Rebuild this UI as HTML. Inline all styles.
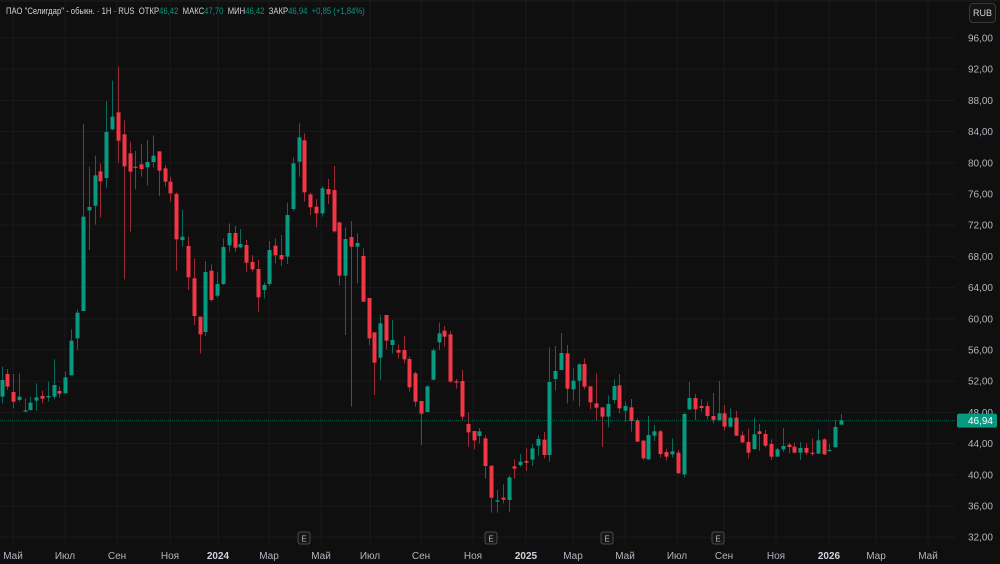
<!DOCTYPE html>
<html><head><meta charset="utf-8">
<style>
html,body{margin:0;padding:0;background:#0f0f0f;width:1000px;height:564px;overflow:hidden;font-family:"Liberation Sans",sans-serif}
#c{position:absolute;left:0;top:0}
.hdr{position:absolute;left:6px;top:6px;font-size:9.5px;color:#d1d4dc;white-space:nowrap;transform:scaleX(0.81);transform-origin:left top}
.hdr .g{color:#089981}
.rub{position:absolute;left:969px;top:3px;width:25px;height:18px;border:1px solid #3a3a3a;border-radius:4px;color:#d1d4dc;font-size:9px;line-height:18px;text-align:center;background:#131313}
</style></head><body>
<svg id="c" width="1000" height="564" xmlns="http://www.w3.org/2000/svg"></svg>
<div class="hdr">ПАО "Селигдар" - обыкн. · 1Н · RUS &nbsp;ОТКР<span class="g">46,42</span> &nbsp;МАКС<span class="g">47,70</span> &nbsp;МИН<span class="g">46,42</span> &nbsp;ЗАКР<span class="g">46,94</span> &nbsp;<span class="g">+0,85 (+1,84%)</span></div>
<div class="rub">RUB</div>
<script>
var s=document.getElementById('c'),h='';
function Y(p){return 38+(96-p)*7.8;}
for(var p=96;p>=32;p-=4){var y=Y(p);h+='<line x1="0" x2="955" y1="'+y+'" y2="'+y+'" stroke="#1a1a1a" stroke-width="1"/>';}
var mon=[[13,'Май'],[65,'Июл'],[117,'Сен'],[170,'Ноя'],[218,'2024',1],[269,'Мар'],[321,'Май'],[370,'Июл'],[421,'Сен'],[473,'Ноя'],[526,'2025',1],[573,'Мар'],[625,'Май'],[677,'Июл'],[724,'Сен'],[776,'Ноя'],[829,'2026',1],[876,'Мар'],[928,'Май']];
mon.forEach(function(m){h+='<line x1="'+m[0]+'" x2="'+m[0]+'" y1="0" y2="546" stroke="#1a1a1a"/>';});
h+='<line x1="0" x2="1000" y1="1" y2="1" stroke="#1e1e1e"/>';
var segs=[[60,[[2,960,1010,920,1030,1],[7,942,980,927,990,0],[13,996,1025,942,1045,0],[19,1010,1020,940,1025,1],[25,1051,1055,1015,1055,1],[30,1028,1050,1010,1052,1],[36,1012,1022,970,1052,1],[42,1008,1016,992,1030,0],[48,1008,1012,965,1025,1],[54,975,1010,898,1018,1],[59,993,1001,980,1012,0],[65,952,1000,935,1000,1],[71,842,946,808,946,1],[77,758,835,748,870,1],[83,470,753,192,753,1],[89,441,451,320,570,1],[95,346,437,287,494,1],[100,334,364,310,472,0],[106,216,354,123,383,1],[112,170,208,62,210,1],[118,157,242,20,308,0],[124,223,319,181,658,0],[130,280,335,245,515,0],[135,320,323,273,388,0],[141,313,327,253,350,0],[147,306,322,240,376,1],[153,287,306,226,322,1],[159,274,332,274,408,0],[165,325,365,315,380,0],[170,365,400,350,425,0],[176,402,538,398,632,0],[182,530,540,450,560,1],[188,558,652,530,690,0],[194,655,768,595,795,0]]],
[110,[[200,620,673,620,730,0],[205,486,666,453,678,1],[211,482,570,463,575,0],[217,522,557,485,563,1],[223,411,522,385,525,1],[229,369,406,340,425,1],[235,369,413,348,425,0],[240,402,412,357,415,1],[246,405,458,390,485,0],[252,456,478,435,485,0],[258,477,562,450,605,0],[264,525,540,518,565,1],[269,420,522,393,528,1],[275,407,436,385,460,0],[281,435,448,375,468,0],[287,315,440,278,462,1],[293,160,297,142,303,1],[299,82,155,40,200,1],[304,91,247,70,275,0],[310,253,292,248,315,0],[316,290,310,267,352,0],[322,235,310,228,320,1],[328,237,253,207,282,0],[334,240,364,168,368,0],[339,337,497,337,525,0],[345,387,497,352,675,1],[351,381,410,333,890,0],[357,399,410,370,520,1],[363,438,575,415,575,0],[369,564,685,564,705,0],[374,667,758,667,855,0],[380,640,743,615,810,1],[386,615,692,615,718,0],[392,690,705,630,730,1],[398,720,728,703,745,0]]],
[310,[[404,120,148,78,160,0],[409,147,232,140,245,0],[415,190,275,185,290,0],[421,273,311,273,405,0],[427,229,306,226,306,1],[433,121,209,115,212,1],[439,70,97,38,120,1],[444,62,80,48,110,0],[450,73,215,63,218,0],[456,214,218,207,236,0],[462,213,320,180,330,0],[468,342,367,308,410,0],[474,363,391,363,418,0],[479,364,378,354,400,1],[485,385,468,375,505,0],[491,467,563,467,608,0],[497,571,575,540,608,1],[503,563,569,523,580,0],[509,502,570,497,605,1],[514,469,476,448,505,0],[520,455,465,432,470,1],[526,453,458,415,482,0],[532,415,449,403,468,1],[538,387,407,376,437,1],[544,389,435,366,445,0],[549,216,435,112,455,1],[555,183,207,108,242,1],[561,129,180,69,180,1],[567,130,236,105,280,0],[573,212,238,175,272,1],[579,163,212,160,290,1],[584,162,230,145,238,0],[590,229,277,229,298,0],[596,280,293,190,332,0]]],
[370,[[602,112,140,112,230,0],[608,102,140,76,172,1],[614,48,90,28,100,1],[619,46,115,12,130,0],[625,108,122,95,155,1],[631,112,153,87,185,0],[637,151,215,145,215,0],[643,212,265,210,270,0],[648,195,268,138,270,1],[654,184,197,165,213,1],[660,184,252,180,263,0],[666,246,260,236,272,0],[672,244,253,205,262,1],[678,248,310,240,310,0],[684,132,313,128,322,1],[689,84,118,36,120,1],[695,84,118,72,150,0],[701,108,114,87,125,0],[707,108,138,95,148,0],[713,138,150,69,160,0],[719,130,150,33,152,1],[724,130,170,105,182,0],[730,143,170,115,172,1],[736,143,197,123,197,0],[742,196,217,184,220,0],[748,216,248,176,265,0],[754,193,237,143,240,1],[759,184,192,162,242,0],[765,192,227,180,232,0],[771,222,260,208,270,0],[777,238,260,234,260,1],[783,228,238,174,246,1],[789,224,231,218,250,0],[794,230,248,218,250,0],[800,234,248,216,270,1],[806,234,248,220,255,0],[812,248,250,205,258,0],[818,211,251,178,252,1],[824,208,253,205,255,0],[829,240,242,222,245,1],[835,171,232,150,232,1],[841,151,164,132,164,1]]]];
segs.forEach(function(sg){var o=sg[0];sg[1].forEach(function(c){
 var bt=o+c[1]/3,bb=o+c[2]/3,wt=o+c[3]/3,wb=o+c[4]/3;
 var col=c[5]?'#089981':'#f23645',wc=c[5]?'#0a6b5b':'#9a2a35';
 h+='<line x1="'+(c[0]+0.5)+'" x2="'+(c[0]+0.5)+'" y1="'+wt+'" y2="'+wb+'" stroke="'+wc+'" stroke-width="1"/>';
 var hh=Math.max(1.2,bb-bt);
 h+='<rect x="'+(c[0]-1.5)+'" y="'+bt+'" width="4" height="'+hh+'" fill="'+col+'"/>';
});});
var py=Y(46.94);
h+='<line x1="0" x2="955" y1="'+py+'" y2="'+py+'" stroke="#089981" stroke-opacity="0.55" stroke-dasharray="1 1"/>';
for(var p=96;p>=32;p-=4){h+='<text x="993" y="'+(Y(p)+3.5)+'" fill="#b2b5be" font-size="10" text-anchor="end" font-family="Liberation Sans">'+p+',00</text>';}
h+='<rect x="957" y="'+(py-7)+'" width="40" height="14" rx="2" fill="#089981"/>';
h+='<text x="993" y="'+(py+3.5)+'" fill="#fff" font-size="10" text-anchor="end" font-family="Liberation Sans">46,94</text>';
mon.forEach(function(m){h+='<text x="'+m[0]+'" y="559" fill="'+(m[2]?'#d1d4dc':'#b2b5be')+'" font-size="10" '+(m[2]?'font-weight="bold" ':'')+'text-anchor="middle" font-family="Liberation Sans">'+m[1]+'</text>';});
[304,491,607,718].forEach(function(x){h+='<rect x="'+(x-6)+'" y="532" width="12" height="12" rx="2" fill="#161616" stroke="#4a4a4a"/><text x="'+x+'" y="541.5" fill="#b2b5be" font-size="8" text-anchor="middle" font-family="Liberation Sans">E</text>';});
s.innerHTML=h;
</script>
</body></html>
